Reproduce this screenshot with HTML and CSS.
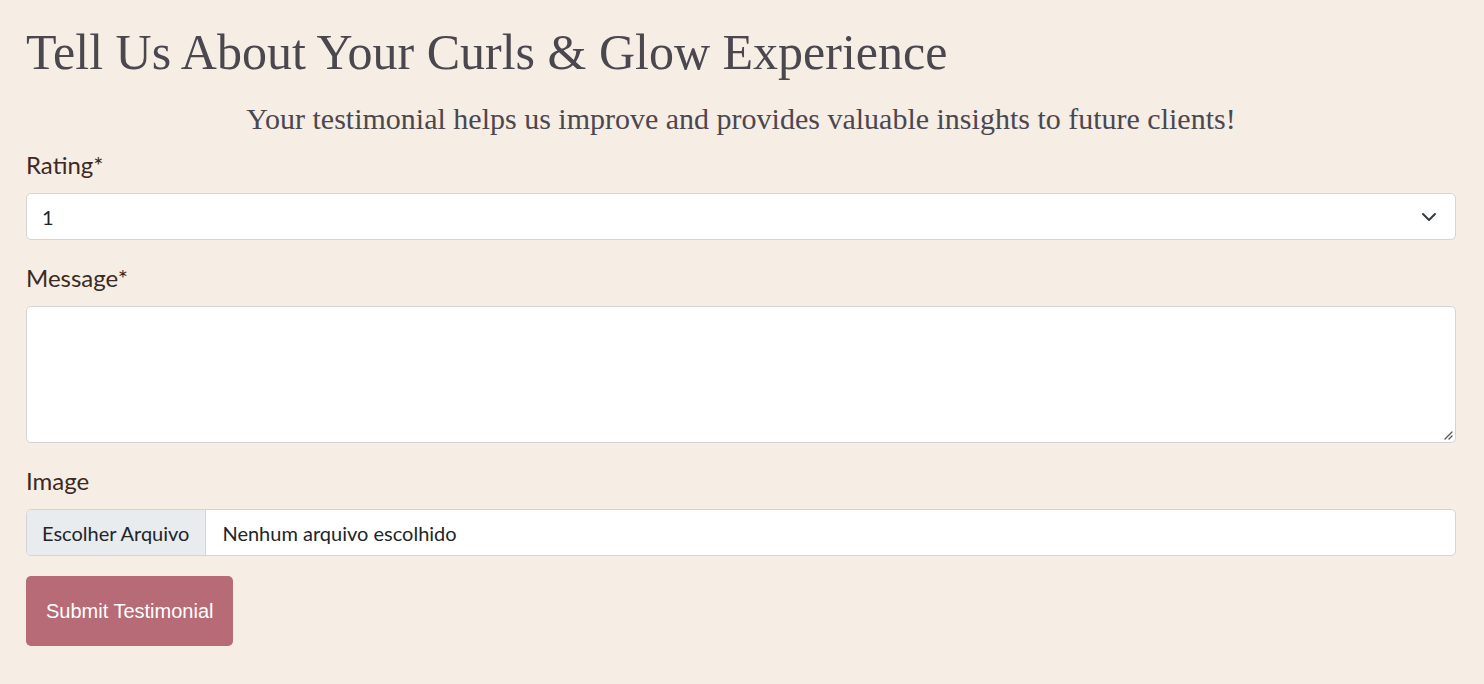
FILE: index.html
```html
<!DOCTYPE html>
<html lang="en">
<head>
<meta charset="utf-8">
<title>Testimonial</title>
<link rel="stylesheet" href="styles.css">
</head>
<body>
<main class="page">
  <h1 class="title">Tell Us About Your Curls &amp; Glow Experience</h1>
  <p class="subtitle">Your testimonial helps us improve and provides valuable insights to future clients!</p>
  <form class="form">
    <div class="field">
      <label class="label" for="rating">Rating*</label>
      <div class="select">
        <span class="select-value">1</span>
        <svg class="chevron" width="16" height="10" viewBox="0 0 16 10"><path d="M2 2l6 6 6-6" fill="none" stroke="#343a40" stroke-width="2" stroke-linecap="round" stroke-linejoin="round"/></svg>
      </div>
    </div>
    <div class="field">
      <label class="label" for="message">Message*</label>
      <div class="textarea">
        <svg class="grip" width="9" height="9" viewBox="0 0 9 9"><path d="M8 1L1 8M8 5L5 8" stroke="#555" stroke-width="1.3" stroke-linecap="round"/></svg>
      </div>
    </div>
    <div class="field">
      <label class="label">Image</label>
      <div class="file">
        <span class="file-btn">Escolher Arquivo</span>
        <span class="file-name">Nenhum arquivo escolhido</span>
      </div>
    </div>
    <button type="button" class="submit">Submit Testimonial</button>
  </form>
</main>
</body>
</html>
```

FILE: styles.css
```css
* { box-sizing: border-box; }
html, body { margin: 0; padding: 0; }
body {
  background: #f6ede4;
  font-family: "Lato", "Liberation Sans", sans-serif;
  color: #3b2a24;
}
.page {
  padding: 22px 28px 30px 26px;
}
.title {
  margin: 0;
  font-family: "Liberation Serif", serif;
  font-weight: 400;
  font-size: 50px;
  line-height: 60px;
  color: #4b474f;
}
.subtitle {
  margin: 17px 0 8px;
  text-align: center;
  font-family: "Liberation Serif", serif;
  font-size: 30px;
  line-height: 40px;
  color: #4b474f;
}
.form { display: flex; flex-direction: column; }
.field { margin-bottom: 20px; }
.label {
  display: block;
  font-size: 24px;
  line-height: 36px;
  margin-bottom: 10px;
}
.select {
  height: 47px;
  background: #fff;
  border: 1px solid #d4d4d4;
  border-radius: 5px;
  display: flex;
  align-items: center;
  justify-content: space-between;
  padding: 0 18px 0 15px;
  font-size: 20px;
  color: #212529;
}
.chevron { display: block; }
.textarea {
  height: 137px;
  background: #fff;
  border: 1px solid #d4d4d4;
  border-radius: 5px;
  display: flex;
  align-items: flex-end;
  justify-content: flex-end;
  padding: 2px;
}
.grip { display: block; }
.file {
  height: 47px;
  display: flex;
  background: #fff;
  border: 1px solid #d4d4d4;
  border-radius: 5px;
  overflow: hidden;
  font-size: 20px;
  color: #212529;
}
.file-btn {
  display: flex;
  align-items: center;
  padding: 0 16px 0 15px;
  background: #e9ecef;
  border-right: 1px solid #d4d4d4;
}
.file-name {
  display: flex;
  align-items: center;
  padding: 0 16px;
}
.submit {
  align-self: flex-start;
  margin-top: 0;
  height: 70px;
  padding: 0 20px;
  border: none;
  border-radius: 5px;
  background: #b76b76;
  color: #fff;
  font-family: "Liberation Sans", Arial, sans-serif;
  font-size: 20px;
}
```
